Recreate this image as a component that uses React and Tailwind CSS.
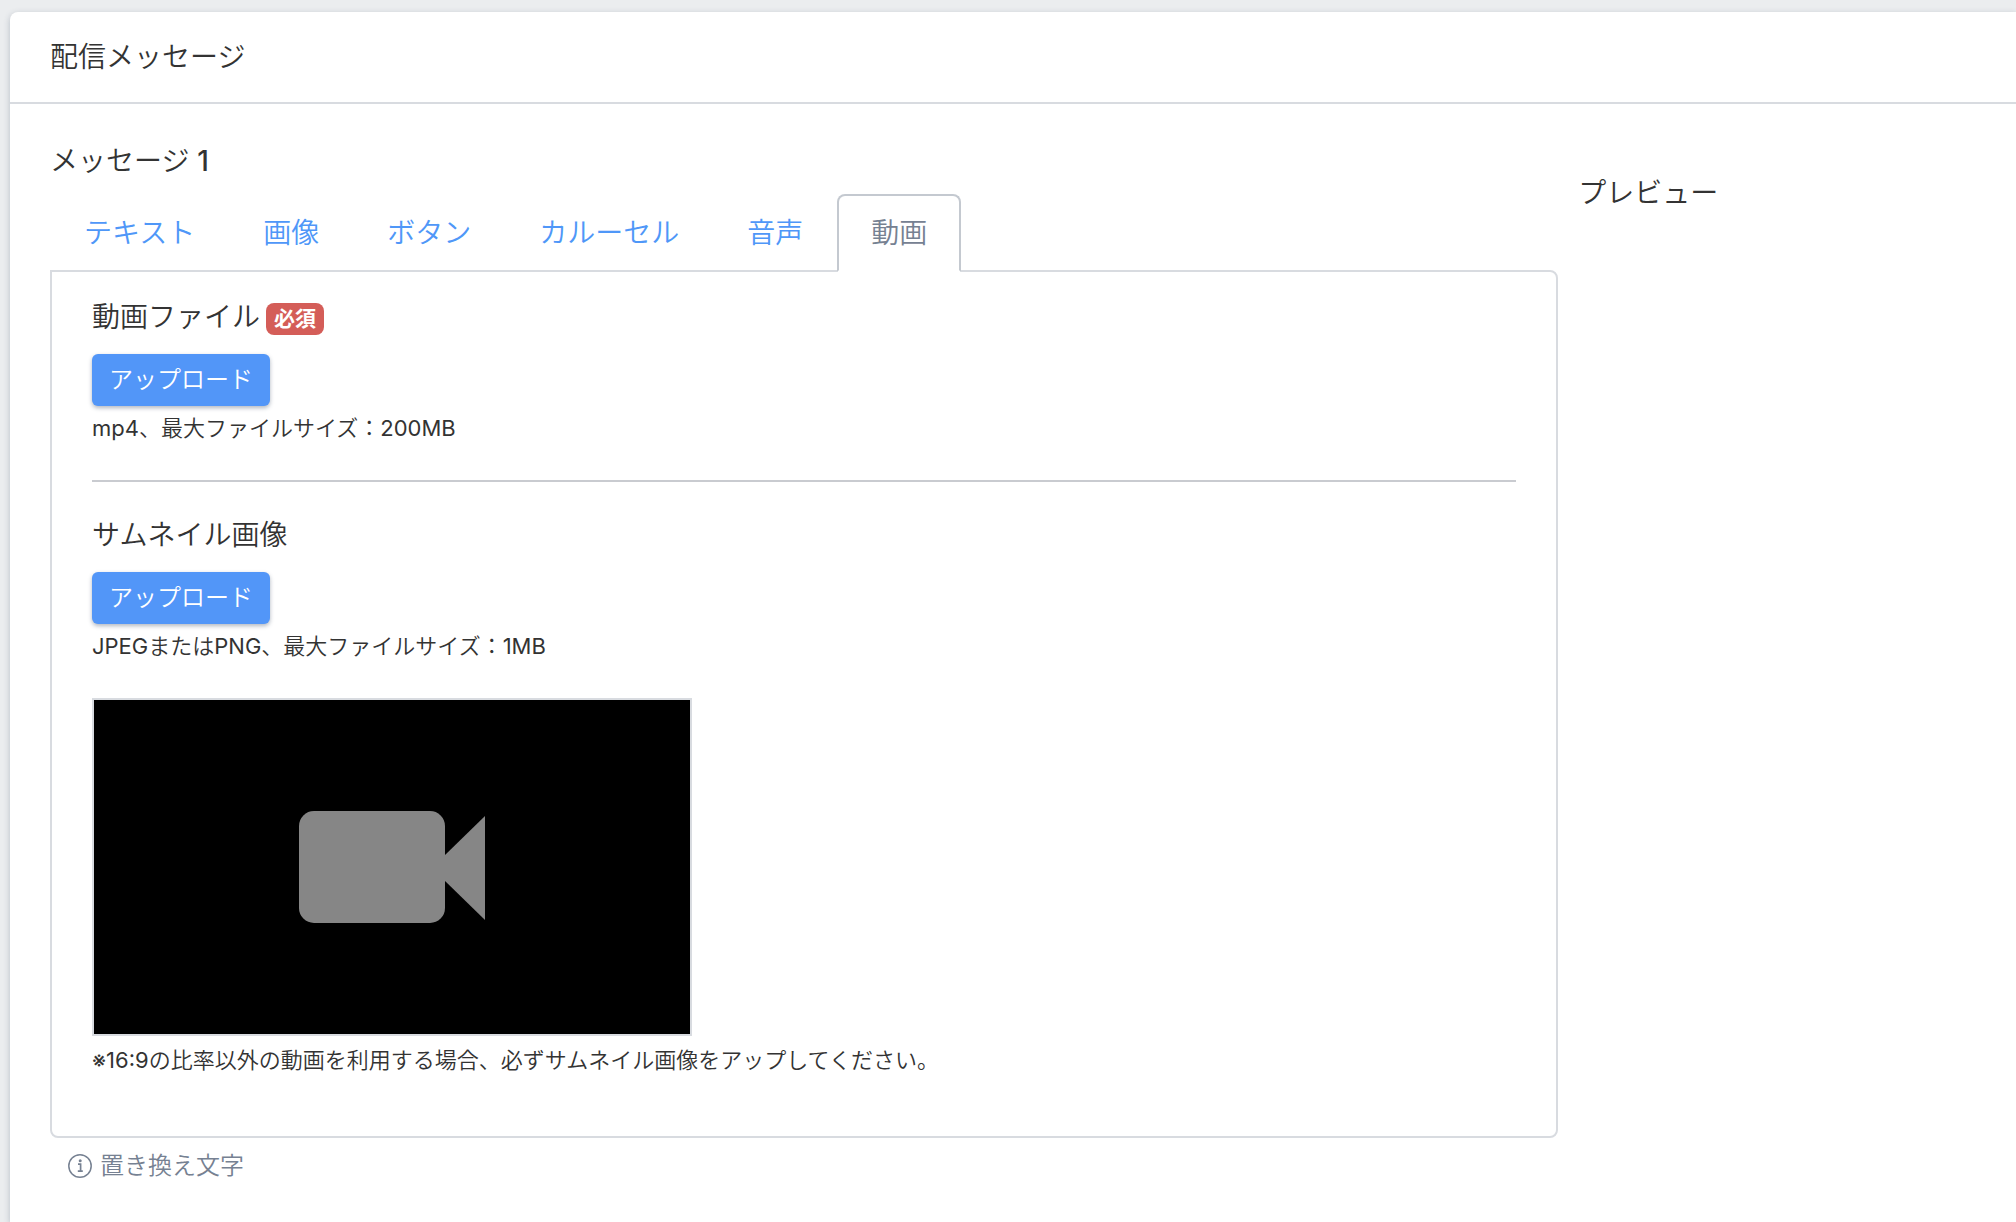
import React, { useState } from 'react';

const TABS = ['テキスト', '画像', 'ボタン', 'カルーセル', '音声', '動画'];

function InfoIcon() {
  return (
    <svg className="h-6 w-6" viewBox="0 0 24 24" fill="none" stroke="currentColor" aria-hidden="true">
      <circle cx="12" cy="12" r="11.2" strokeWidth="1.5" />
      <path d="M10 10.2h2.6v6.8M9.8 17.2h5" strokeWidth="1.7" />
      <circle cx="12.2" cy="6.8" r="1.5" fill="currentColor" stroke="none" />
    </svg>
  );
}

function VideoIcon() {
  return (
    <svg className="h-28 w-[186px]" viewBox="0 0 186 112" fill="currentColor" aria-hidden="true">
      <rect width="146" height="112" rx="15" />
      <path d="M145 45L186 5v104L145 69z" />
    </svg>
  );
}

// Latin letters and digits look too thin next to kana at the body weight
function Latin({ children }) {
  return <span className="font-normal">{children}</span>;
}

function MessageTabs({ active, onSelect }) {
  return (
    <nav className="relative -mb-0.5 flex">
      {TABS.map((tab) => (
        <a
          key={tab}
          href="#"
          onClick={(e) => {
            e.preventDefault();
            onSelect(tab);
          }}
          className={
            tab === active
              ? 'rounded-t-lg border-2 border-[#c4c9d0] border-b-white bg-white px-8 py-4 text-[#768192]'
              : 'rounded-t-lg border-2 border-transparent px-8 py-4 text-[#4f97f8]'
          }
        >
          {tab}
        </a>
      ))}
    </nav>
  );
}

function UploadField({ label, required, children }) {
  return (
    <div>
      <div className="flex items-center gap-1.5">
        <span>{label}</span>
        {required && (
          <span className="mt-1 rounded-lg bg-[#d45d58] px-2 text-[21px] leading-8 font-bold text-white">必須</span>
        )}
      </div>
      <button
        type="button"
        aria-label={`${label} アップロード`}
        className="mt-4 block h-[52px] rounded-md bg-[#5296f8] px-[17px] text-2xl text-white shadow-[0_2px_4px_rgba(60,75,100,0.4)]"
      >
        アップロード
      </button>
      <p className="mt-1.5 text-[22px] leading-8">{children}</p>
    </div>
  );
}

function VideoPanel() {
  return (
    <section className="rounded-b-lg rounded-tr-lg border-2 border-[#d8dbe0] px-10 pt-6 pb-15">
      <UploadField label="動画ファイル" required>
        <Latin>mp4</Latin>、最大ファイルサイズ：<Latin>200MB</Latin>
      </UploadField>
      <hr className="mt-9 mb-8 border-t-2 border-[#c9cbd0]" />
      <UploadField label="サムネイル画像">
        <Latin>JPEG</Latin>または<Latin>PNG</Latin>、最大ファイルサイズ：<Latin>1MB</Latin>
      </UploadField>
      <div className="mt-9 flex h-[338px] w-[600px] items-center justify-center border-2 border-[#d8dbe0] bg-black text-[#868686]">
        <VideoIcon />
      </div>
      <p className="mt-2 text-[22px] leading-8">
        <Latin>※16:9</Latin>の比率以外の動画を利用する場合、必ずサムネイル画像をアップしてください。
      </p>
    </section>
  );
}

function App() {
  const [tab, setTab] = useState('動画');

  return (
    <div className="flex min-h-screen flex-col overflow-hidden bg-[#ebedef] pt-3 pl-2.5 font-['Inter','Noto_Sans_CJK_JP',sans-serif] text-[28px] leading-[42px] font-[350] text-[#333333]">
      <div className="flex-1 rounded-tl-lg bg-white shadow-[0_2px_6px_rgba(60,75,100,0.3)]">
        <header className="border-b-2 border-[#d8dbe0] px-10 py-6">
          <h1>配信メッセージ</h1>
        </header>
        <main className="grid grid-cols-[31fr_9fr] gap-5 pt-9 pl-10">
          <div>
            <h2 className="mb-3">
              メッセージ <span className="font-medium">1</span>
            </h2>
            <MessageTabs active={tab} onSelect={setTab} />
            <VideoPanel />
            <button type="button" className="mt-2 flex items-center gap-2 pl-[18px] text-2xl leading-10 text-[#768192]">
              <InfoIcon />
              置き換え文字
            </button>
          </div>
          <aside className="pt-8">
            <h2>プレビュー</h2>
          </aside>
        </main>
      </div>
    </div>
  );
}

export default App;
